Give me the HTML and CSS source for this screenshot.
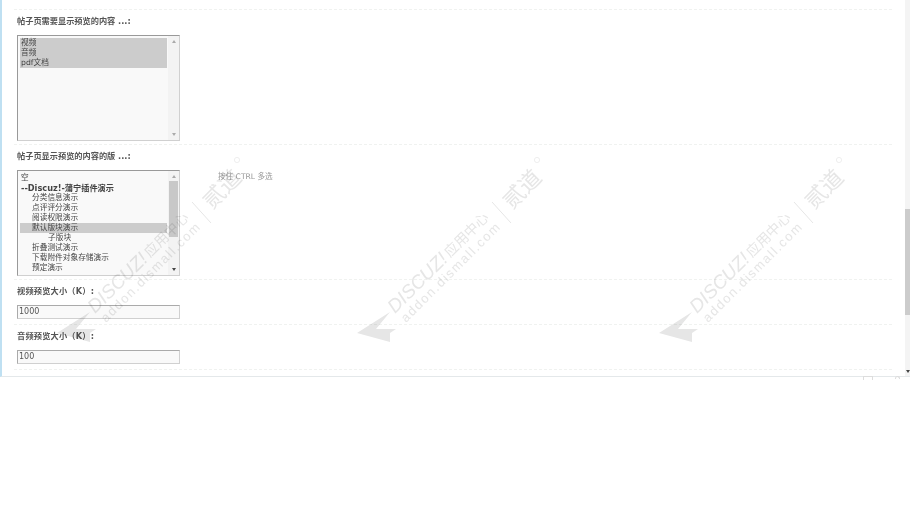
FILE: index.html
```html
<!DOCTYPE html>
<html lang="zh-CN">
<head>
<meta charset="utf-8">
<title>插件设置</title>
<link rel="stylesheet" href="styles.css">
</head>
<body>
<div class="frame">
  <main class="content">
    <section class="row row-list">
      <h3 class="label">帖子页需要显示预览的内容 ...:</h3>
      <div class="listbox">
        <ul class="options">
          <li class="sel">视频</li>
          <li class="sel">音频</li>
          <li class="sel">pdf文档</li>
        </ul>
        <div class="lb-scroll"><span class="arr up"></span><span class="arr down"></span></div>
      </div>
    </section>
    <section class="row row-list2">
      <h3 class="label">帖子页显示预览的内容的版 ...:</h3>
      <div class="with-tip">
        <div class="listbox">
          <ul class="options">
            <li>空</li>
            <li class="group">--Discuz!-蒲宁插件演示</li>
            <li class="l1">分类信息演示</li>
            <li class="l1">点评评分演示</li>
            <li class="l1">阅读权限演示</li>
            <li class="l1 sel">默认版块演示</li>
            <li class="l2">子版块</li>
            <li class="l1">折叠测试演示</li>
            <li class="l1">下载附件对象存储演示</li>
            <li class="l1">预定演示</li>
          </ul>
          <div class="lb-scroll"><span class="arr up"></span><span class="lb-thumb"></span><span class="arr down dark"></span></div>
        </div>
        <span class="tip">按住 CTRL 多选</span>
      </div>
    </section>
    <section class="row row-input">
      <h3 class="label wide">视频预览大小（K）:</h3>
      <input class="field" type="text" value="1000">
    </section>
    <section class="row row-input">
      <h3 class="label wide">音频预览大小（K）:</h3>
      <input class="field" type="text" value="100">
    </section>
  </main>
  <div class="scrollbar"><span class="thumb"></span><span class="arr down dark"></span></div>
</div>
<div class="corner"><span class="c-box"></span><span class="c-arc"></span></div>

<svg class="wm wm1" width="260" height="220" viewBox="0 0 260 220"><use href="#mark"/></svg>
<svg class="wm wm2" width="260" height="220" viewBox="0 0 260 220"><use href="#mark"/></svg>
<svg class="wm wm3" width="260" height="220" viewBox="0 0 260 220">
  <defs>
    <g id="mark" fill="#e6e6e6">
      <path d="M17 193 L50 172 L36 189 L56 189 L50 193 L50 202 Z"/>
      <text class="wm-big" transform="translate(55 174) rotate(-45)">DISCUZ!</text>
      <text class="wm-cn" transform="translate(110 118) rotate(-45)">应用中心</text>
      <path d="M152 62 L171 83" stroke="#e6e6e6" stroke-width="1" fill="none"/>
      <text class="wm-dao" transform="translate(172 70) rotate(-45)">贰道</text>
      <text class="wm-url" transform="translate(66 183) rotate(-45)">addon.dismall.com</text>
      <circle cx="197" cy="20" r="2.6" fill="none" stroke="#e6e6e6" stroke-width=".7"/>
    </g>
  </defs>
  <use href="#mark"/>
</svg>
</body>
</html>
```
FILE: styles.css
```css
* { box-sizing: border-box; }
html, body { margin: 0; padding: 0; background: #fff; overflow: hidden; }
body {
  width: 910px;
  height: 513px;
  position: relative;
  font-family: "DejaVu Sans", "Noto Sans CJK SC", sans-serif;
  color: #444;
  filter: blur(.3px);
}
.frame {
  height: 377px;
  border-left: 2px solid #bfe0f2;
  border-bottom: 1px solid #e4e8ea;
  position: relative;
  display: flex;
  overflow: hidden;
}
.content {
  width: 890px;
  padding: 9px 0 0 12px;
  margin-right: 1px;
}
.row { border-top: 1px dashed #f0f2f0; padding-left: 3px; }
.row-list { height: 135px; }
.row-list2 { height: 135px; }
.row-input { height: 45px; }
.row-input:last-child { border-bottom: 1px dashed #f0f2f0; height: 46px; }
.label {
  margin: 0;
  padding-top: 6px;
  height: 25px;
  font-size: 8.2px;
  line-height: 10px;
  font-weight: bold;
  color: #555;
}
.label.wide { letter-spacing: .2px; }
.with-tip { display: flex; align-items: flex-start; }
.listbox {
  width: 163px;
  height: 106px;
  border: 1px solid #aaa;
  border-color: #999 #d0d0d0 #d0d0d0 #999;
  background: #f9f9f9;
  display: flex;
  padding: 2px 0 0 2px;
  flex: none;
}
.options {
  list-style: none;
  margin: 0;
  padding: 0;
  width: 149px;
  font-size: 7.7px;
  line-height: 10px;
  color: #444;
}
.options li { height: 10px; padding-left: 1px; white-space: nowrap; }
.options .sel { background: #ccc; }
.options .group { font-weight: bold; font-size: 8.2px; }
.options .l1 { padding-left: 12px; }
.options .l2 { padding-left: 28px; }
.lb-scroll {
  width: 11px;
  margin: -2px 0 0 1px;
  background: #f3f3f3;
  display: flex;
  flex-direction: column;
  align-items: center;
  justify-content: space-between;
  position: relative;
  padding: 4px 0;
}
.lb-thumb {
  position: absolute;
  left: 1px;
  top: 10px;
  width: 9px;
  height: 56px;
  background: #c8c8c8;
}
.arr { width: 0; height: 0; border-left: 2px solid transparent; border-right: 2px solid transparent; }
.arr.up { border-bottom: 3px solid #aaa; }
.arr.down { border-top: 3px solid #aaa; }
.arr.dark { border-top-color: #444; }
.tip { font-size: 7.6px; line-height: 10px; margin: 2px 0 0 38px; color: #999; }
.field {
  display: block;
  width: 163px;
  height: 14px;
  border: 1px solid #d0d0d0;
  border-top-color: #aaa;
  border-left-color: #aaa;
  background: #f9f9f9;
  font: 8px/11px "DejaVu Sans", sans-serif;
  color: #555;
  padding: 0 1px 1px;
  margin: 0;
  outline: 0;
}
.scrollbar {
  position: absolute;
  right: 0;
  top: 0;
  bottom: 0;
  width: 5px;
  background: #f4f4f4;
}
.thumb { position: absolute; top: 209px; left: 0; width: 5px; height: 106px; background: #ccc; }
.scrollbar .arr { position: absolute; bottom: 3px; left: 1px; }
.corner { position: absolute; left: 863px; top: 376px; display: flex; gap: 22px; }
.c-box { width: 10px; height: 4px; border: 1px solid #ddd; border-bottom: 0; }
.c-arc { width: 5px; height: 3px; border: 1px solid #ddd; border-bottom: 0; border-radius: 3px 3px 0 0; }
.wm { position: absolute; pointer-events: none; mix-blend-mode: multiply; }
.wm1 { left: 40px; top: 140px; }
.wm2 { left: 340px; top: 140px; }
.wm3 { left: 642px; top: 140px; }
.wm-big { font: italic 19px "Liberation Sans", sans-serif; }
.wm-cn { font: 14px "Noto Sans CJK SC", sans-serif; }
.wm-dao { font: 22px "Noto Sans CJK SC", sans-serif; }
.wm-url { font: 13px "Liberation Sans", sans-serif; letter-spacing: 1.6px; }
```
